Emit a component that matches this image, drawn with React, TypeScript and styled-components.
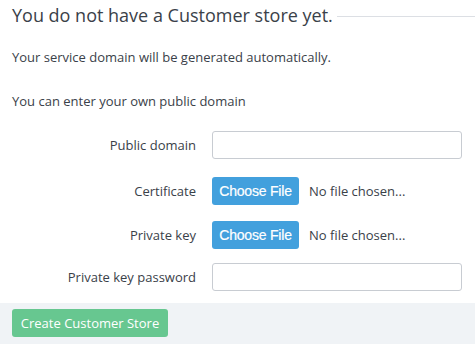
import { FC } from 'react';
import styled, { createGlobalStyle } from 'styled-components';

const GlobalStyle = createGlobalStyle`
  html, body {
    margin: 0;
    padding: 0;
    background: #ffffff;
  }
  body {
    font-family: 'Open Sans', 'Liberation Sans', sans-serif;
    color: #333a40;
  }
`;

const Page = styled.div`
  width: 475px;
  height: 344px;
  display: flex;
  flex-direction: column;
  overflow: hidden;
`;

const Content = styled.div`
  padding: 0 0 0 12px;
  flex: 1;
`;

const Heading = styled.h2`
  display: flex;
  align-items: center;
  gap: 4px;
  margin: 0;
  padding-top: 2px;
  font-size: 18px;
  font-weight: 400;
  line-height: 26px;
  color: #3a4149;
  white-space: nowrap;

  &::after {
    content: '';
    flex: 1;
    height: 1px;
    margin-top: 2px;
    background: #dcdfe4;
  }
`;

const Paragraph = styled.p<{ $top: number }>`
  margin: 0;
  font-size: 13px;
  line-height: 18px;
  color: #3a4149;
  padding-top: ${({ $top }) => $top}px;
`;

const Form = styled.div`
  display: flex;
  flex-direction: column;
  padding: 0 13px 0 0;
`;

const Row = styled.div<{ $top: number }>`
  display: grid;
  grid-template-columns: 184px 1fr;
  column-gap: 16px;
  align-items: center;
  height: 28px;
  margin-top: ${({ $top }) => $top}px;
`;

const Label = styled.label`
  text-align: right;
  font-size: 13px;
  color: #3a4149;
`;

const TextInput = styled.input`
  box-sizing: border-box;
  width: 250px;
  height: 28px;
  border: 1px solid #c8ccd2;
  border-radius: 3px;
  background: #fff;
  outline: none;
`;

const FileField = styled.div`
  display: flex;
  align-items: center;
  gap: 10px;
`;

const ChooseButton = styled.button`
  box-sizing: border-box;
  width: 87px;
  height: 28px;
  border: none;
  border-radius: 3px;
  background: #42a0dd;
  color: #fff;
  font-family: 'Liberation Sans', Arial, sans-serif;
  font-size: 14px;
  letter-spacing: -0.2px;
  -webkit-text-stroke: 0.2px #fff;
  padding: 0;
`;

const FileName = styled.span`
  font-size: 13px;
  color: #3a4149;
`;

const Footer = styled.div`
  height: 41px;
  flex-shrink: 0;
  background: #f0f3f6;
  padding: 6px 12px 0;
  box-sizing: border-box;
`;

const SubmitButton = styled.button`
  box-sizing: border-box;
  width: 156px;
  height: 28px;
  border: none;
  border-radius: 3px;
  background: #67c790;
  color: #fff;
  font-family: 'Open Sans', sans-serif;
  font-size: 13px;
  padding: 0;
`;

const fields = [
  { label: 'Public domain', kind: 'text', top: 21 },
  { label: 'Certificate', kind: 'file', top: 18 },
  { label: 'Private key', kind: 'file', top: 16 },
  { label: 'Private key password', kind: 'text', top: 14 },
];

const App: FC = () => (
  <>
    <GlobalStyle />
    <Page>
      <Content>
        <Heading>You do not have a Customer store yet.</Heading>
        <Paragraph $top={20}>Your service domain will be generated automatically.</Paragraph>
        <Paragraph $top={26}>You can enter your own public domain</Paragraph>
        <Form>
          {fields.map((f) => (
            <Row key={f.label} $top={f.top}>
              <Label>{f.label}</Label>
              {f.kind === 'text' ? (
                <TextInput type="text" />
              ) : (
                <FileField>
                  <ChooseButton>Choose File</ChooseButton>
                  <FileName>No file chosen...</FileName>
                </FileField>
              )}
            </Row>
          ))}
        </Form>
      </Content>
      <Footer>
        <SubmitButton>Create Customer Store</SubmitButton>
      </Footer>
    </Page>
  </>
);

export default App;
